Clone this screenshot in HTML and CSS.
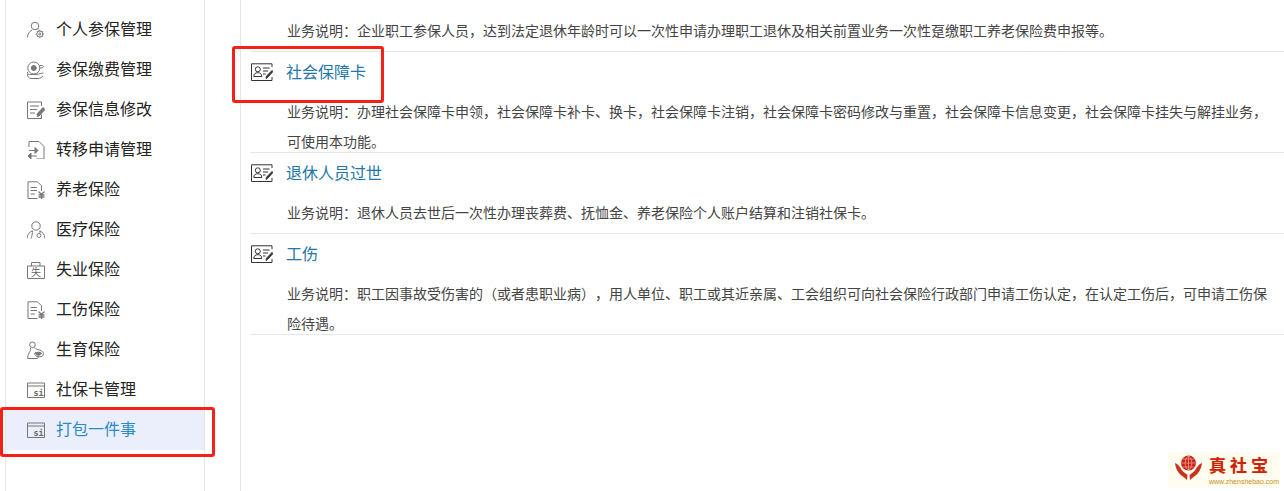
FILE: index.html
```html
<!DOCTYPE html>
<html lang="zh-CN">
<head>
    <meta charset="UTF-8">
    <title>社会保险业务</title>
    <link rel="stylesheet" href="styles.css">
</head>
<body>
    <!-- Shared icons -->
    <svg class="icon-defs" xmlns="http://www.w3.org/2000/svg">
        <symbol id="i-person" viewBox="0 0 18 18">
            <circle cx="8" cy="5" r="3.800"/>
            <path d="M.5 16.500c0-3.500 1.800-6 4.500-7.300M10.800 8.500l1 .8"/>
            <circle cx="12.800" cy="13" r="3"/>
            <circle cx="12.800" cy="13" r="1"/>
            <path d="M12.800 8.800v1.300M12.800 15.900v1.300M8.600 13h1.300M15.700 13h1.300M9.900 10.100l.9.900M14.800 15l.9.900M9.900 15.900l.9-.9M14.800 11l.9-.9"/>
        </symbol>
        <symbol id="i-pay" viewBox="0 0 18 18">
            <circle cx="6.800" cy="7" r="6"/>
            <circle cx="6.800" cy="7" r="2.500" fill="#777"/>
            <path d="M12.500 4.500c2.500 0 4 .3 4 1-.2 1.200-2 1.500-3.500 1.500M.5 11c0 1.500.5 2.500 2 2.500h5.500c2.500 0 5.500-1 8.500-1.500M.5 13c0 3 1.500 4.500 3.500 4.500h7c2 0 3.500-1 5-2.500"/>
        </symbol>
        <symbol id="i-edit" viewBox="0 0 18 18">
            <path d="M14.500 5V1H.5v16.500h14v-4"/>
            <path d="M3 5h9M3 8.500h7M3 12h5"/>
            <path d="M10.500 15.500l-.5-2.500 6-6.500 2 2-6 6.500z" fill="#777"/>
        </symbol>
        <symbol id="i-transfer" viewBox="0 0 18 18">
            <path d="M2 6V.5h10l5 5v12.500H9"/>
            <path d="M2 9.500h6"/>
            <path d="M8 6.500l3 3-3 3z" fill="#777"/>
            <path d="M4 15h6"/>
            <path d="M4 12l-3 3 3 3z" fill="#777"/>
        </symbol>
        <symbol id="i-money" viewBox="0 0 18 18">
            <path d="M10.500 17.500H1V.8h9.500l4 4v5"/>
            <path d="M3.500 6.500h6.500M3.500 9.500h6.500M3.500 13h4.500"/>
            <path class="icon-bold" d="M11.500 10.500l3 3 3-3M14.500 13.500v4.500M11.500 14h6M11.500 16h6"/>
        </symbol>
        <symbol id="i-doctor" viewBox="0 0 18 18">
            <circle cx="9" cy="5" r="4.200"/>
            <path d="M0 17.500c.2-4.200 2.500-6.500 5.500-7.700M18 17.500c-.2-4.200-2.500-6.500-5.500-7.700M5.500 9.800c0 2.500-.5 5-1.500 7.700"/>
            <circle cx="12" cy="14.500" r="2"/>
            <path d="M12.500 10c1 1.200.5 2.200 0 2.600"/>
        </symbol>
        <symbol id="i-case" viewBox="0 0 18 18">
            <path d="M.5 5h17v12.500H.5zM4.500 5V1.500h8.500V5"/>
            <text class="icon-char" x="9" y="15">失</text>
        </symbol>
        <symbol id="i-birth" viewBox="0 0 18 18">
            <circle cx="5.500" cy="3.800" r="2.800"/>
            <path d="M3.500 6.800c.5 2.200-.5 3.700-1.500 5.200-1 1.500-1.500 3.500-1.200 5.500h9.500c.8-.3 1-1.500.7-2"/>
            <path d="M7.500 6.800c1 1.200 3 1.700 5 2.200 2.500.7 4 2 4 3.800 0 2-2 3-4 3-3 0-5-1.500-5-3.500"/>
            <path d="M8 11.800c2-.8 5.500-.8 6.500.4-1 1.300-2 2-3 2.300-1.500-.5-3-1.500-3.500-2.700z" fill="#777"/>
        </symbol>
        <symbol id="i-si" viewBox="0 0 18 18">
            <path d="M.5 2h17v14.500H.5zM.5 5h17"/>
            <text class="icon-si" x="11.500" y="14.500">si</text>
        </symbol>
        <symbol id="i-card" viewBox="0 0 22 18">
            <path d="M21 4V.8H.5v16.700h20.500V14"/>
            <circle cx="6.800" cy="6.300" r="2.500"/>
            <path d="M2.800 13.500c0-2.500 1.500-3.800 4-3.800s4 1.300 4 3.800zM12 5h6.500M12 8h5M12 11h2.500"/>
            <path d="M15 15.500l.5-2.300 5.500-5.700 1 1-5.500 5.900z" fill="#333"/>
        </symbol>
    </svg>

    <div class="page">
        <ul class="side-menu">
            <li class="menu-item"><svg class="menu-icon"><use href="#i-person"/></svg>个人参保管理</li>
            <li class="menu-item"><svg class="menu-icon"><use href="#i-pay"/></svg>参保缴费管理</li>
            <li class="menu-item"><svg class="menu-icon"><use href="#i-edit"/></svg>参保信息修改</li>
            <li class="menu-item"><svg class="menu-icon"><use href="#i-transfer"/></svg>转移申请管理</li>
            <li class="menu-item"><svg class="menu-icon"><use href="#i-money"/></svg>养老保险</li>
            <li class="menu-item"><svg class="menu-icon"><use href="#i-doctor"/></svg>医疗保险</li>
            <li class="menu-item"><svg class="menu-icon"><use href="#i-case"/></svg>失业保险</li>
            <li class="menu-item"><svg class="menu-icon"><use href="#i-money"/></svg>工伤保险</li>
            <li class="menu-item"><svg class="menu-icon"><use href="#i-birth"/></svg>生育保险</li>
            <li class="menu-item"><svg class="menu-icon"><use href="#i-si"/></svg>社保卡管理</li>
            <li class="menu-item active"><svg class="menu-icon"><use href="#i-si"/></svg>打包一件事</li>
        </ul>

        <div class="content">
            <div class="row row-cut">
                <p class="row-desc">业务说明：企业职工参保人员，达到法定退休年龄时可以一次性申请办理职工退休及相关前置业务一次性趸缴职工养老保险费申报等。</p>
            </div>
            <div class="row row-tall">
                <div class="row-title"><svg class="row-icon"><use href="#i-card"/></svg>社会保障卡</div>
                <p class="row-desc">业务说明：办理社会保障卡申领，社会保障卡补卡、换卡，社会保障卡注销，社会保障卡密码修改与重置，社会保障卡信息变更，社会保障卡挂失与解挂业务，可使用本功能。</p>
            </div>
            <div class="row">
                <div class="row-title"><svg class="row-icon"><use href="#i-card"/></svg>退休人员过世</div>
                <p class="row-desc">业务说明：退休人员去世后一次性办理丧葬费、抚恤金、养老保险个人账户结算和注销社保卡。</p>
            </div>
            <div class="row row-tall">
                <div class="row-title"><svg class="row-icon"><use href="#i-card"/></svg>工伤</div>
                <p class="row-desc">业务说明：职工因事故受伤害的（或者患职业病），用人单位、职工或其近亲属、工会组织可向社会保险行政部门申请工伤认定，在认定工伤后，可申请工伤保险待遇。</p>
            </div>
        </div>
    </div>

    <!-- Red annotation boxes -->
    <div class="mark mark-title"></div>
    <div class="mark mark-menu"></div>

    <!-- Watermark -->
    <div class="watermark">
        <svg class="watermark-logo" viewBox="0 0 30 30" xmlns="http://www.w3.org/2000/svg">
            <circle cx="14.500" cy="8" r="7.500" fill="#c9241c"/>
            <path d="M7 8h15M14.500 .5v15M8.500 4h12M8.500 12h12M14.500 .5c-4.500 4-4.500 11 0 15M14.500 .5c4.500 4 4.500 11 0 15" fill="none" stroke="#f2b8a0" stroke-width=".6"/>
            <path d="M1 8c.5 5 3 10 6.500 12.500 2 1.500 4 3 5.500 4.500l.5-5c-2-2-4.500-3-6-5.500C6 12 4 9 1 8z" fill="#c9341c"/>
            <path d="M28 8c-.5 5-3 10-6.500 12.500-2 1.500-4 3-5.500 4.500l-.5-5c2-2 4.500-3 6-5.500C23 12 25 9 28 8z" fill="#c9341c"/>
        </svg>
        <div class="watermark-text">
            <div class="watermark-name">真社宝</div>
            <div class="watermark-url">www.zhenshebao.com</div>
        </div>
    </div>
</body>
</html>
```

FILE: styles.css
```css
body {
    margin: 0;
    height: 100vh;
    overflow: hidden;
    background-color: #ffffff;
    color: #333333;
    font-family: "Noto Sans CJK SC", "Noto Sans", sans-serif;
    text-spacing-trim: space-all;
}

.icon-defs {
    display: none;
}

.page {
    display: flex;
    height: 100%;
}

/* Side menu */
.side-menu {
    list-style: none;
    margin: 0 35px 0 5px;
    padding: 10px 0 0;
    width: 198px;
    flex: none;
    border-left: 1px solid #e6e6e6;
    border-right: 1px solid #e6e6e6;
}

.menu-item {
    display: flex;
    align-items: center;
    gap: 12px;
    box-sizing: border-box;
    height: 40px;
    padding: 0 0 4px 21px;
    font-size: 16px;
    color: #222222;
}

.menu-item.active {
    background-color: #ebeffc;
    color: #2b8ac6;
}

.menu-icon {
    width: 18px;
    height: 18px;
    flex: none;
    margin-top: 4px;
    margin-right: -1px;
    fill: none;
    stroke: #777777;
    stroke-width: 1;
}

.icon-bold {
    stroke-width: 1.300;
}

.icon-char {
    font-size: 10px;
    text-anchor: middle;
    fill: #666666;
    stroke: none;
}

.icon-si {
    font-family: "DejaVu Sans Mono", monospace;
    font-size: 8.500px;
    font-weight: bold;
    text-anchor: middle;
    fill: #666666;
    stroke: none;
}

/* Right side list */
.content {
    flex: 1;
    min-width: 0;
    border-left: 1px solid #e6e6e6;
    padding-left: 9px;
}

.row {
    height: 80px;
    border-bottom: 1px solid #e6e6e6;
}

.row-tall {
    height: 100px;
}

.row-cut {
    height: 51px;
}

.row-title {
    display: flex;
    align-items: center;
    gap: 13px;
    box-sizing: border-box;
    height: 40px;
    padding: 0 0 2px 1px;
    font-size: 16px;
    color: #2477a8;
}

.row-icon {
    width: 22px;
    height: 18px;
    flex: none;
    margin-top: 2px;
    fill: none;
    stroke: #333333;
    stroke-width: 1;
}

.row-desc {
    margin: 0;
    padding: 4px 12px 0 37px;
    font-size: 14px;
    line-height: 30px;
    color: #444444;
}

.row-cut .row-desc {
    padding-top: 15px;
}

/* Annotation boxes */
.mark {
    position: absolute;
    box-sizing: border-box;
    border: 3px solid #f5201a;
    border-radius: 3px;
}

.mark-title {
    left: 232px;
    top: 46px;
    width: 152px;
    height: 57px;
}

.mark-menu {
    left: 0;
    top: 407px;
    width: 215px;
    height: 50px;
}

/* Watermark */
.watermark {
    position: absolute;
    right: 4px;
    bottom: 3px;
    width: 112px;
    height: 36px;
    display: flex;
    align-items: flex-start;
    gap: 5px;
    padding: 3px 0 0 6px;
    box-sizing: border-box;
    background-color: #fffdf0;
}

.watermark-logo {
    width: 30px;
    height: 30px;
    flex: none;
}

.watermark-text {
    margin-top: 1px;
}

.watermark-name {
    font-size: 17px;
    line-height: 18px;
    letter-spacing: 4px;
    font-weight: bold;
    color: #cf2018;
    text-shadow: 0 0 1px #f5c842;
}

.watermark-url {
    margin-top: 4px;
    font-family: "Liberation Sans", sans-serif;
    font-size: 7px;
    line-height: 7px;
    color: #c8901a;
}
```
